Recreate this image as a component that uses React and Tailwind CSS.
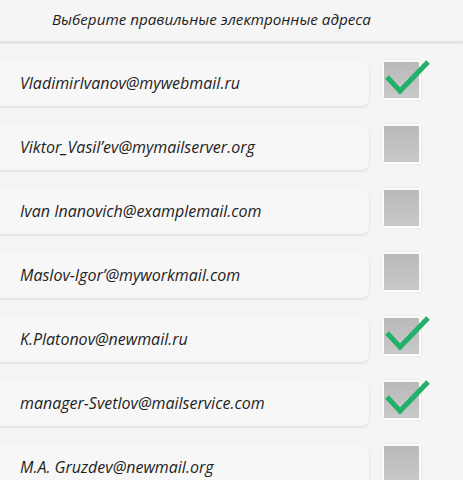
const emails = [
  { text: 'VladimirIvanov@mywebmail.ru', checked: true },
  { text: 'Viktor_Vasil’ev@mymailserver.org', checked: false },
  { text: 'Ivan Inanovich@examplemail.com', checked: false },
  { text: 'Maslov-Igor’@myworkmail.com', checked: false },
  { text: 'K.Platonov@newmail.ru', checked: true },
  { text: 'manager-Svetlov@mailservice.com', checked: true },
  { text: 'M.A. Gruzdev@newmail.org', checked: false },
]

const Check = () => (
  <svg className="absolute -left-[1px] -top-[1px] overflow-visible" width="50" height="40" viewBox="0 0 50 40">
    <path d="M6 18 L19 32 L47 3" fill="none" stroke="#22b06a" strokeWidth="5" strokeLinejoin="miter" />
  </svg>
)

const App = () => {
  return (
    <div
      className="w-[463px] h-[480px] overflow-hidden bg-[#f5f5f5] text-[#1e1e1e] italic"
      style={{ fontFamily: '"Open Sans", "Noto Sans", sans-serif' }}
    >
      <div className="h-[42px] pl-[52px] pt-[8px] text-[15.2px] shadow-[0_1px_2px_rgba(0,0,0,0.12)] border-b border-[#e6e6e6]">
        Выберите правильные электронные адреса
      </div>

      <div className="flex flex-col gap-[18px] pt-[18px]">
        {emails.map((item) => (
          <div key={item.text} className="flex items-start">
            <div className="w-[369px] h-[46px] flex items-center pl-[20px] bg-[#f7f7f7] rounded-r-[7px] shadow-[0_1px_3px_rgba(0,0,0,0.12)] text-[16px]">
              {item.text}
            </div>
            <div className="relative ml-[13px] w-[39px] h-[40px] rounded-[3px] bg-white/70 p-[2px] shadow-[0_0_2px_rgba(0,0,0,0.12)]">
              <div className="w-full h-full bg-gradient-to-b from-[#b9b9b9] to-[#c9c9c9]" />
              {item.checked && <Check />}
            </div>
          </div>
        ))}
      </div>
    </div>
  )
}

export default App
